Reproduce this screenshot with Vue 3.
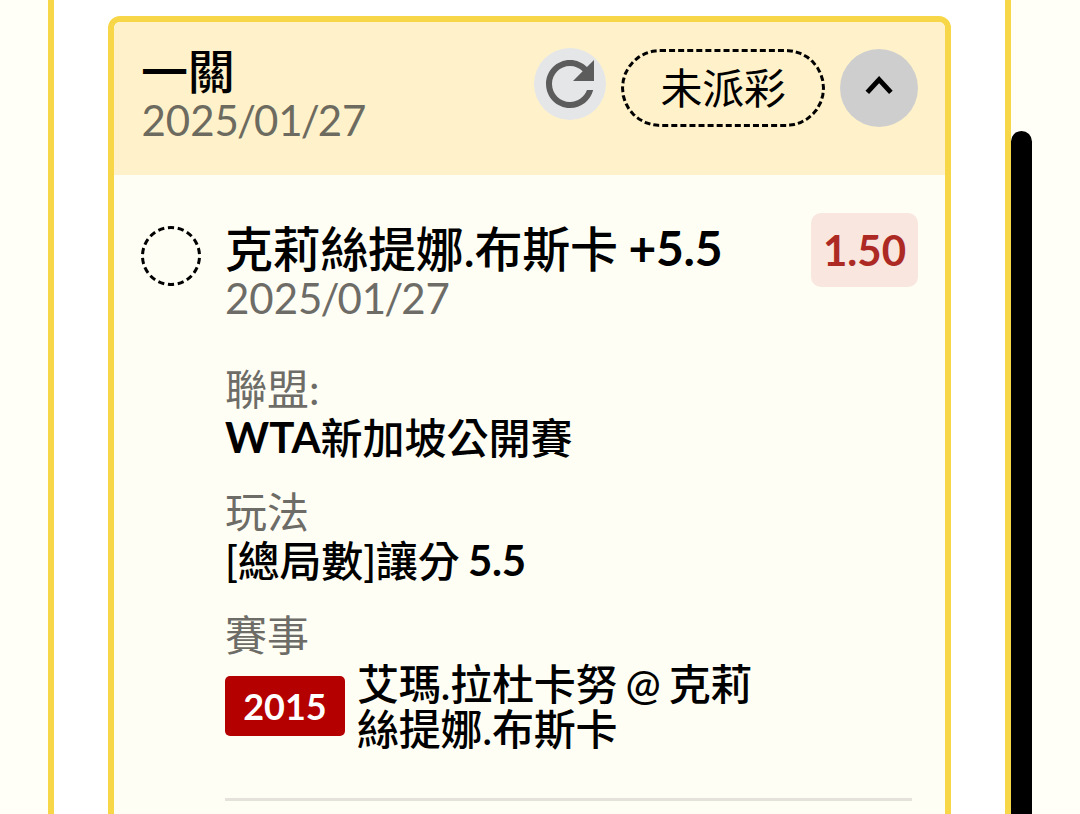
<script setup>
import { ref } from "vue";

const open = ref(true);
const ticket = ref({ title: "一關", date: "2025/01/27", status: "未派彩" });
const bet = ref({
  pick: "克莉絲提娜.布斯卡",
  handicap: "+5.5",
  date: "2025/01/27",
  odds: "1.50",
  tour: "WTA",
  league: "新加坡公開賽",
  play: "[總局數]讓分",
  points: "5.5",
  code: "2015",
  match: "艾瑪.拉杜卡努 @ 克莉絲提娜.布斯卡",
});

const dateParts = (d) => d.split(/(\/)/);
</script>

<template>
  <div class="page">
    <main class="panel">
      <article class="card">
        <header class="card-head">
          <div class="head-text">
            <div class="title">{{ ticket.title }}</div>
            <div class="date">
              <span v-for="(p, i) in dateParts(ticket.date)" :key="i" :class="{ slash: p === '/' }">{{ p }}</span>
            </div>
          </div>
          <button class="refresh" aria-label="refresh">
            <svg viewBox="0 0 24 24" width="72" height="72">
              <path fill="#5c5c5c" d="M17.65 6.35C16.2 4.9 14.21 4 12 4c-4.42 0-7.99 3.58-7.99 8s3.57 8 7.99 8c3.73 0 6.84-2.55 7.73-6h-2.08c-.82 2.33-3.04 4-5.65 4-3.31 0-6-2.69-6-6s2.69-6 6-6c1.66 0 3.14.69 4.22 1.78L13 11h7V4l-2.35 2.35z" />
            </svg>
          </button>
          <div class="status">{{ ticket.status }}</div>
          <button class="toggle" aria-label="toggle" @click="open = !open">
            <svg viewBox="0 0 78 78" width="78" height="78">
              <path d="M27.3 43.3L39.1 30.5L50.9 43.3" fill="none" stroke="#000" stroke-width="4.9" />
            </svg>
          </button>
        </header>
        <section v-if="open" class="bet">
          <svg class="ring" viewBox="0 0 60 60" width="60" height="60">
            <circle cx="30" cy="30" r="28.5" fill="none" stroke="#000" stroke-width="3" pathLength="100" stroke-dasharray="3.5 2.0556" stroke-dashoffset="1.75" transform="rotate(-90 30 30)" />
          </svg>
          <div class="bet-body">
            <div class="bet-top">
              <div>
                <div class="title pick">{{ bet.pick }} <b>{{ bet.handicap }}</b></div>
                <div class="date">
                  <span v-for="(p, i) in dateParts(bet.date)" :key="i" :class="{ slash: p === '/' }">{{ p }}</span>
                </div>
              </div>
              <div class="odds">{{ bet.odds }}</div>
            </div>
            <dl class="info">
              <dt>聯盟:</dt>
              <dd><b>{{ bet.tour }}</b>{{ bet.league }}</dd>
              <dt>玩法</dt>
              <dd class="play">{{ bet.play }} <b>{{ bet.points }}</b></dd>
              <dt>賽事</dt>
              <dd class="match">
                <span class="code">{{ bet.code }}</span>
                <span class="teams">{{ bet.match }}</span>
              </dd>
            </dl>
            <hr />
          </div>
        </section>
      </article>
    </main>
    <div class="scroll-thumb"></div>
  </div>
</template>

<style>
body {
  margin: 0;
  overflow: hidden;
}
</style>

<style scoped>
.page {
  display: flex;
  box-sizing: border-box;
  height: 814px;
  padding-left: 48px;
  background: #fffef7;
  color: #000;
  font-family: Lato, "Noto Sans CJK TC", sans-serif;
  overflow: hidden;
}
.panel {
  box-sizing: border-box;
  width: 963px;
  padding: 15.5px 54px 0;
  border: solid #f7d748;
  border-width: 0 6px;
  background: #fff;
}
.card {
  box-sizing: border-box;
  height: 860px;
  border: 6px solid #f7d748;
  border-radius: 12px;
  background: #fffef5;
  overflow: hidden;
}
.card-head {
  display: flex;
  align-items: flex-start;
  box-sizing: border-box;
  height: 153.5px;
  padding: 27px 27px 0 28px;
  background: #fff2ca;
}
.head-text {
  flex: 1;
  margin-top: -1.5px;
}
.title {
  font-size: 48px;
  font-weight: 500;
  letter-spacing: -0.3px;
  line-height: 48px;
  white-space: nowrap;
}
.head-text .title {
  margin-left: -1px;
  font-size: 47px;
}
.pick {
  word-spacing: -1px;
}
b {
  line-height: 1;
  vertical-align: 1px;
}
.date {
  display: flex;
  color: #6d6b5f;
  font-size: 42px;
  line-height: 50px;
}
.head-text .date {
  margin-left: -0.5px;
}
.bet .date {
  color: #6d6c67;
}
.slash {
  margin: 0 -2px;
}
button {
  padding: 0;
  border: 0;
  border-radius: 50%;
}
button svg {
  display: block;
}
.refresh {
  width: 72px;
  height: 72px;
  margin-top: -0.3px;
  background: #e5e6e8;
}
.status {
  box-sizing: border-box;
  width: 204px;
  height: 78px;
  margin: 0 15px;
  border: 3px dashed #000;
  border-radius: 39px;
  font-size: 42px;
  letter-spacing: -0.4px;
  line-height: 73px;
  text-align: center;
}
.toggle {
  width: 78px;
  height: 78px;
  background: #cecece;
}
.bet {
  display: flex;
  padding: 37.5px 27px 0;
}
.ring {
  flex: none;
  margin: 13px 24px 0 0;
}
.bet-body {
  flex: 1;
}
.bet-top {
  display: flex;
  justify-content: space-between;
  align-items: flex-start;
}
.bet-top .title {
  margin-top: 11px;
}
.odds {
  width: 107px;
  height: 74px;
  border-radius: 10px;
  background: #f8e6df;
  color: #ad2a24;
  font-size: 42px;
  font-weight: 700;
  line-height: 75px;
  text-align: center;
}
.info {
  margin: 42px 0 0;
  font-size: 42px;
}
dt {
  color: #6d6c67;
  line-height: 49px;
}
dd {
  margin: -1px 0 25px;
  font-weight: 500;
  line-height: 50px;
  word-spacing: -2px;
}
.play {
  letter-spacing: -0.2px;
}
.match {
  display: flex;
  align-items: center;
  margin: 0;
}
.code {
  flex: none;
  width: 120px;
  height: 60px;
  margin-right: 12px;
  border-radius: 5px;
  background: #b50000;
  color: #fff;
  font-size: 36px;
  font-weight: 700;
  line-height: 61px;
  text-align: center;
}
.teams {
  width: 405px;
  padding-top: 2px;
  letter-spacing: -0.25px;
  line-height: 45px;
  word-break: break-all;
}
hr {
  width: 687px;
  height: 3px;
  margin: 46.5px 0 0;
  border: 0;
  background: #e5e2dc;
}
.scroll-thumb {
  width: 21px;
  height: 720px;
  margin-top: 131px;
  border-radius: 11px;
  background: #000;
}
</style>
